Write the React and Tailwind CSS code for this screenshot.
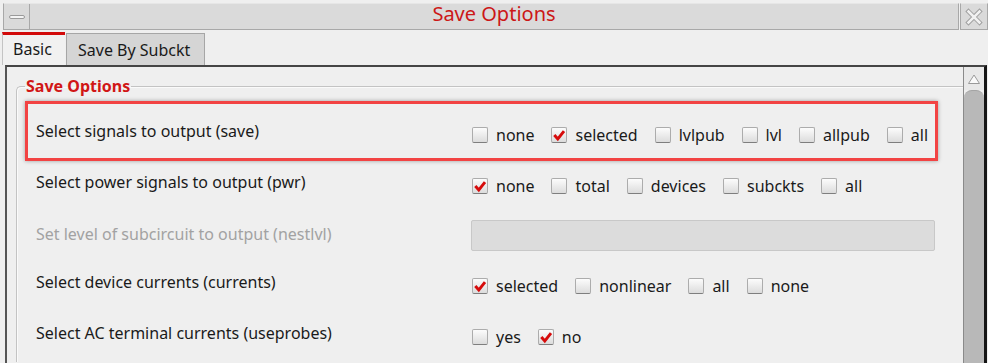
import React from 'react';

function Check({ on }) {
  return (
    <span className="w-4 h-4 shrink-0 rounded-[2px] border border-[#acacac] border-b-[#7e7e7e] bg-linear-to-b from-[#fcfcfc] to-[#dcdcdc] flex items-center justify-center">
      {on && (
        <svg width="14" height="14" viewBox="0 0 14 14">
          <path d="M2.3 7 L5.8 11 L12 3.2" fill="none" stroke="#d60c0c" strokeWidth="2.9" strokeLinejoin="miter" />
        </svg>
      )}
    </span>
  );
}

function Options({ items }) {
  return (
    <div className="flex items-center gap-[17px] pt-[8px]">
      {items.map(([label, on]) => (
        <label key={label} className="flex items-center gap-[8px]">
          <Check on={on} />
          <span>{label}</span>
        </label>
      ))}
    </div>
  );
}

function Row({ label, h, disabled, children }) {
  return (
    <div className="flex items-center" style={{ height: h }}>
      <div className={'w-[436px] shrink-0 ' + (disabled ? 'text-[#a2a2a2]' : 'text-[#1a1a1a]')}>{label}</div>
      {children}
    </div>
  );
}

export default function App() {
  return (
    <div className="w-[988px] h-[363px] overflow-hidden bg-[#efefef] font-['Noto_Sans','DejaVu_Sans',sans-serif] text-[16px] text-[#1a1a1a]">
      {/* title bar */}
      <div className="pt-[3px] pl-[3px] flex">
        <div className="flex-1 flex h-[27px] bg-[#dadada] border border-[#a8a8a8] border-t-[#e6e6e6]">
          <div className="w-[26px] border-r border-[#a8a8a8] flex items-center justify-center">
            <span className="w-[16px] h-[4px] rounded-[2px] bg-[#f4f4f4] border border-[#9a9a9a]"></span>
          </div>
          <div className="flex-1 flex items-center justify-center pb-[5px] text-[20px] text-[#cc1717]">Save Options</div>
        </div>
        <div className="w-[28px] h-[27px] ml-[1px] bg-[#dadada] border border-[#a8a8a8] border-t-[#e6e6e6] flex items-center justify-center">
          <svg width="18" height="18" viewBox="0 0 18 18">
            <path d="M3.5 3.5 L14.5 14.5 M14.5 3.5 L3.5 14.5" stroke="#a0a0a0" strokeWidth="4.5" strokeLinecap="square" />
            <path d="M3.5 3.5 L14.5 14.5 M14.5 3.5 L3.5 14.5" stroke="#f1f1f1" strokeWidth="2.5" strokeLinecap="square" />
          </svg>
        </div>
      </div>

      {/* tabs */}
      <div className="h-[35px] flex items-end pl-[2px]">
        <div className="h-[33px] w-[63px] border-t-[3px] border-[#d20a0a] border-l border-l-[#c4c4c4] bg-[#f1f1f1] flex items-center pl-[10px] pb-[2px]">Basic</div>
        <div className="h-[32px] w-[139px] ml-[1px] bg-[#d5d5d5] border border-b-0 border-[#a6a6a6] flex items-center pl-[11px]">Save By Subckt</div>
      </div>

      {/* panel */}
      <div className="ml-[5px] w-[982px] h-[300px] flex border-t-2 border-l-2 border-r-[3px] border-t-[#454545] border-l-[#555] border-r-[#151515]">
        <div className="flex-1 overflow-hidden">
          <fieldset className="mt-[9px] ml-[9px] border-t border-l border-[#c3c3c3] rounded-tl-[5px] shadow-[inset_1px_1px_0_#fafafa]">
            <legend className="ml-[8px] px-[1px] text-[16px] leading-[20px] font-bold text-[#d11616]">Save Options</legend>
            <div className="relative pt-[10px] pl-[19px]">
              <div className="absolute left-[8px] top-[5px] w-[913px] h-[60px] border-[3px] border-[#f24343] shadow-[0_0_4px_rgba(0,0,0,0.35)]"></div>
              <Row label="Select signals to output (save)" h={50}>
                <Options items={[['none', false], ['selected', true], ['lvlpub', false], ['lvl', false], ['allpub', false], ['all', false]]} />
              </Row>
              <Row label="Select power signals to output (pwr)" h={51}>
                <Options items={[['none', true], ['total', false], ['devices', false], ['subckts', false], ['all', false]]} />
              </Row>
              <Row label="Set level of subcircuit to output (nestlvl)" h={53} disabled>
                <div className="-ml-[1px] mt-[4px] w-[464px] h-[31px] rounded-[2px] bg-[#dcdcdc] border border-[#c8c8c8]"></div>
              </Row>
              <Row label="Select device currents (currents)" h={43}>
                <Options items={[['selected', true], ['nonlinear', false], ['all', false], ['none', false]]} />
              </Row>
              <Row label="Select AC terminal currents (useprobes)" h={59}>
                <Options items={[['yes', false], ['no', true]]} />
              </Row>
            </div>
          </fieldset>
        </div>

        {/* scrollbar */}
        <div className="w-[21px] flex flex-col border-l border-[#8a8a8a]">
          <div className="h-[23px] bg-[#e8e8e8] flex items-center justify-center">
            <svg width="14" height="12" viewBox="0 0 14 12">
              <path d="M7 2 L12.5 10.5 L1.5 10.5 Z" fill="#fafafa" stroke="#9a9a9a" strokeWidth="1" />
            </svg>
          </div>
          <div className="flex-1 bg-[#b8b8b8] rounded-t-[8px] border-t border-[#a4a4a4]"></div>
        </div>
      </div>
    </div>
  );
}
